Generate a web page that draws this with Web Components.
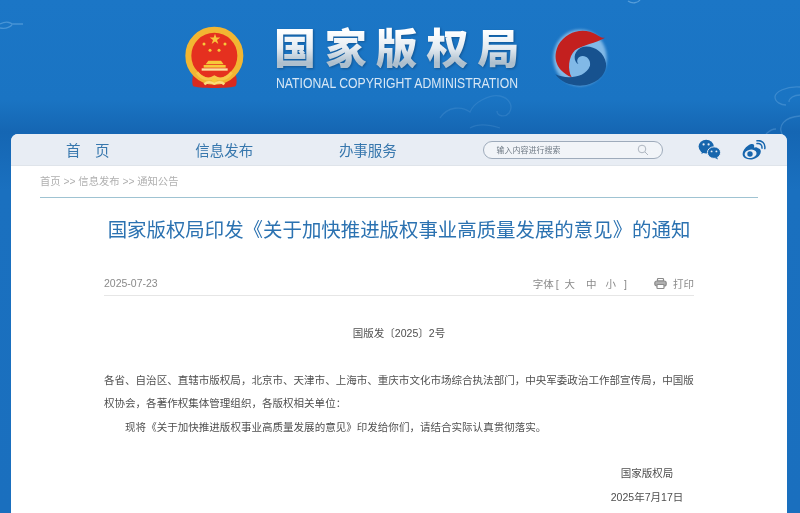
<!DOCTYPE html>
<html lang="zh-CN">
  <head>
    <meta charset="UTF-8" />
    <title>国家版权局</title>
    <style>
      html, body { margin: 0; height: 513px; overflow: hidden; }
      body {
        background: linear-gradient(#1b76c6 0, #1a74c3 100px, #1566b3 132px, #1a70bf 190px, #1a6fbe 513px);
        font-family: "Liberation Sans", "Noto Sans CJK SC", sans-serif;
      }
    </style>
  </head>
  <body>
    <template id="tpl-banner">
      <style>
        :host { display: flex; height: 134px; position: relative; box-sizing: border-box; padding: 15px 0 0 175px; gap: 20px; }
        .clouds { position: absolute; inset: 0; width: 100%; height: 100%; pointer-events: none; }
        .names { display: flex; flex-direction: column; width: 245px; position: relative; padding-top: 9px; filter: blur(.3px); }
        h1 {
          margin: 0 0 8px -1px; font: 900 42px/44px "Noto Sans CJK SC", sans-serif; letter-spacing: 8.8px; white-space: nowrap;
          background: linear-gradient(#fdfeff 18%, #e4ebf1 55%, #aebfcd 88%);
          -webkit-background-clip: text; background-clip: text; color: transparent;
          filter: drop-shadow(1px 1px 1px rgba(10, 60, 110, .55));
        }
        p { margin: 0 0 0 1px; font: 14.5px/15px "Liberation Sans", sans-serif; color: #d7e7f5; white-space: nowrap; transform: scaleX(.843); transform-origin: 0 50%; }
      </style>
      <svg class="clouds" viewBox="0 0 800 134" fill="none" stroke="#8fc3ee" stroke-opacity=".28" stroke-width="1.3">
        <path d="M0 24c8-4 12 0 12 0h11M0 28c6 1 10-1 12-3" stroke-opacity=".4" />
        <path d="M800 87c-14-1-25 5-25 10s6 8 11 8M800 95c-6 0-11 3-11 7M782 134c-4-8 2-17 18-18M766 134c3-3 6-5 10-5" />
        <path d="M640 0c-2 3-8 4-12 1" stroke-opacity=".5" />
        <path d="M440 118c8-12 22-12 30-6 4-10 20-18 30-16 9 2 14 10 9 17-4 5-12 3-12-2M470 128c10-6 24-2 30 0" stroke-opacity=".16" />
      </svg>
      <slot name="left"></slot>
      <div class="names">
        <h1><slot name="cn"></slot></h1>
        <p><slot name="en"></slot></p>
      </div>
      <slot name="right"></slot>
    </template>

    <template id="tpl-emblem">
      <style>:host { display: block; width: 80px; height: 85px; } svg { display: block; filter: blur(.4px); }</style>
      <svg width="80" height="85" viewBox="0 0 240 255">
        <path d="M58 165c-6 18-8 38-4 48 10 8 118 8 128 0 6-10 2-32-4-48z" fill="#d92a1f" />
        <circle cx="118" cy="122" r="78" fill="#e5301f" stroke="#f2b632" stroke-width="18" />
        <path d="M120 56l4 11.500h12l-10 7.500 4 12-10-7.500-10 7.500 4-12-10-7.500h12z" fill="#f9c43a" />
        <g fill="#f7c93a">
          <circle cx="87" cy="87" r="4.500" /><circle cx="105" cy="106" r="4.500" /><circle cx="132" cy="106" r="4.500" /><circle cx="150" cy="87" r="4.500" />
          <path d="M92 148l8-11h38l8 11z" /><rect x="86" y="150" width="66" height="8" /><rect x="80" y="160" width="78" height="7" fill="#fbe3a0" />
        </g>
        <path d="M66 172c14 20 36 26 52 14 16 12 38 6 52-14" fill="none" stroke="#f7c64a" stroke-width="9" />
        <path d="M88 208c8-8 18-8 30-2 12-6 22-6 30 2" fill="none" stroke="#fbdc7d" stroke-width="7" />
        <circle cx="118" cy="196" r="7" fill="#f7c93a" />
      </svg>
    </template>

    <template id="tpl-swirl">
      <style>:host { display: block; width: 80px; height: 85px; } svg { display: block; overflow: visible; filter: blur(.4px); }</style>
      <svg width="80" height="85" viewBox="0 0 240 255">
        <defs>
          <filter id="glow" x="-20%" y="-20%" width="140%" height="140%"><feGaussianBlur stdDeviation="5" /></filter>
        </defs>
        <ellipse cx="120" cy="128" rx="80" ry="84" fill="#9ccbf0" opacity=".8" filter="url(#glow)" />
        <path d="M195 68C180 70 175 58 150 50 115 40 75 55 55 90 38 125 45 165 95 187 82 165 85 125 105 106 125 90 170 84 195 68Z" fill="#c3201f" />
        <path d="M46 178C75 192 135 192 150 152 154 130 132 116 118 126 110 132 110 142 116 148 100 140 98 112 122 98 150 86 192 105 198 145 202 185 160 212 120 212 90 212 60 200 46 178Z" fill="#17528f" />
      </svg>
    </template>

    <template id="tpl-nav">
      <style>
        :host { display: flex; align-items: center; height: 31px; padding: 0 0 0 55px; gap: 85.7px; background: #e8edf4; border-bottom: 1px solid #dfe4ea; font: 14.5px/1 "Noto Sans CJK SC", sans-serif; color: #3777ad; }
        ::slotted(span) { position: relative; top: 1px; }
        .icons { display: flex; align-items: center; gap: 21px; margin-left: -50px; }
        svg { display: block; }
      </style>
      <slot></slot>
      <x-search></x-search>
      <div class="icons">
        <svg width="23" height="21" viewBox="0 0 23 21"><ellipse cx="8.2" cy="7.6" rx="7.6" ry="6.8" fill="#1766ad" /><path d="M4 12l-.6 3 3.6-2z" fill="#1766ad" /><ellipse cx="16" cy="13.6" rx="6.6" ry="5.8" fill="#1766ad" stroke="#e8edf4" stroke-width="1" /><path d="M19 18l1 2.4-3.4-1.6z" fill="#1766ad" /><circle cx="5.6" cy="5.4" r="1.1" fill="#e8edf4" /><circle cx="10.6" cy="5.4" r="1.1" fill="#e8edf4" /><circle cx="13.6" cy="12.4" r=".95" fill="#e8edf4" /><circle cx="18.4" cy="12.4" r=".95" fill="#e8edf4" /></svg>
        <svg width="24" height="20" viewBox="0 0 24 20"><path d="M16 8.2c2.8.6 3.4 3 2.4 5.2-1.6 3.6-5.6 6-10 6C4 19.4.6 17.5.6 14c0-3 2.4-6.4 5.6-8.6 2.6-1.6 5-1.8 5.7-.6.5.8.3 1.8 0 2.8 1.6-.6 3-.8 4.1.6z" fill="#1766ad" /><ellipse cx="8.6" cy="13.8" rx="6" ry="4.2" fill="#e8edf4" transform="rotate(-10 8.6 13.8)" /><circle cx="8" cy="14" r="2.7" fill="#1766ad" /><path d="M15 3.6c3.2-.8 5.4 1.6 5 4.6" fill="none" stroke="#1766ad" stroke-width="1.5" stroke-linecap="round" /><path d="M15 .8c5-1 8.6 2.800 7.800 7.800" fill="none" stroke="#1766ad" stroke-width="1.5" stroke-linecap="round" /></svg>
      </div>
    </template>

    <template id="tpl-search">
      <style>
        :host { display: flex; align-items: center; justify-content: space-between; box-sizing: border-box; width: 180px; height: 18px; padding: 0 13px; border: 1px solid #9eabbb; border-bottom-width: 1.5px; border-radius: 9px; background: #f1f4f8; font: 8px/1 "Noto Sans CJK SC", sans-serif; color: #6f7a85; }
        svg { display: block; }
      </style>
      <span>输入内容进行搜索</span>
      <svg width="12" height="12" viewBox="0 0 12 12" fill="none" stroke="#aeb6c0"><circle cx="5" cy="5" r="3.8" /><path d="M8 8l3 3" /></svg>
    </template>

    <template id="tpl-crumbs">
      <style>
        :host { display: block; box-sizing: border-box; height: 32px; padding-top: 9px; border-bottom: 1px solid #9fc3d2; margin: 0 29px; font: 10.3px/14px "Liberation Sans", "Noto Sans CJK SC", sans-serif; color: #b0b0b0; }
      </style>
      <slot></slot>
    </template>

    <template id="tpl-article">
      <style>
        :host { display: block; padding: 0 93px; }
        h2 { margin: 0; padding-top: 18px; height: 55px; text-align: center; font: 400 19.43px/26px "Noto Sans CJK SC", sans-serif; color: #2b72b1; white-space: nowrap; }
        .meta { display: flex; align-items: center; height: 24px; border-bottom: 1px solid #e6e6e6; font-size: 10.5px; color: #8a8a8a; }
        .date { flex: 1; }
        .size { display: flex; align-items: baseline; }
        .print { display: flex; align-items: center; gap: 6px; margin-left: 27px; }
        svg { display: block; }
        .body { font-size: 10.54px; line-height: 23.5px; color: #4f4f4f; }
      </style>
      <h2><slot name="title"></slot></h2>
      <div class="meta">
        <div class="date"><slot name="date"></slot></div>
        <div class="size">
          <span>字体</span><span style="margin-left:2px">[</span><span style="margin-left:6px">大</span><span style="margin-left:11px">中</span><span style="margin-left:9px">小</span><span style="margin-left:8px">]</span>
        </div>
        <div class="print">
          <svg width="13" height="13" viewBox="0 0 13 13" fill="none" stroke="#8a8a8a" stroke-width="1.2"><rect x="3.5" y="1.500" width="6" height="2.500" rx=".8" /><rect x=".8" y="4" width="11.4" height="5" rx="2" fill="#b0b0b0" /><rect x="3" y="7.500" width="7" height="4" rx=".8" fill="#fff" /></svg>
          打印
        </div>
      </div>
      <div class="body"><slot></slot></div>
    </template>

    <template id="tpl-card">
      <style>
        :host { display: block; margin: 0 13px 0 11px; height: 379px; overflow: hidden; background: #fff; border-radius: 7px 7px 0 0; filter: blur(.3px); }
      </style>
      <slot></slot>
    </template>

    <x-banner>
      <x-emblem slot="left"></x-emblem>
      <span slot="cn">国家版权局</span>
      <span slot="en">NATIONAL COPYRIGHT ADMINISTRATION</span>
      <x-swirl slot="right"></x-swirl>
    </x-banner>

    <x-card>
      <x-nav>
        <span>首　页</span>
        <span>信息发布</span>
        <span>办事服务</span>
      </x-nav>
      <x-crumbs>首页 &gt;&gt; 信息发布 &gt;&gt; 通知公告</x-crumbs>
      <x-article>
        <span slot="title">国家版权局印发《关于加快推进版权事业高质量发展的意见》的通知</span>
        <span slot="date">2025-07-23</span>
        <div style="text-align:center;margin:26px 0 23px">国版发〔2025〕2号</div>
        <div>各省、自治区、直辖市版权局，北京市、天津市、上海市、重庆市文化市场综合执法部门，中央军委政治工作部宣传局，中国版权协会，各著作权集体管理组织，各版权相关单位：</div>
        <div style="text-indent:2em">现将《关于加快推进版权事业高质量发展的意见》印发给你们，请结合实际认真贯彻落实。</div>
        <div style="width:94px;margin:23px 0 0 auto;text-align:center;white-space:nowrap">国家版权局<br />2025年7月17日</div>
      </x-article>
    </x-card>

    <script>
      class Base extends HTMLElement {
        connectedCallback() {
          if (this.shadowRoot) return;
          const tpl = document.getElementById(this.constructor.tpl);
          this.attachShadow({ mode: "open" }).append(tpl.content.cloneNode(true));
        }
      }
      const tags = {
        "x-banner": "tpl-banner",
        "x-emblem": "tpl-emblem",
        "x-swirl": "tpl-swirl",
        "x-nav": "tpl-nav",
        "x-search": "tpl-search",
        "x-crumbs": "tpl-crumbs",
        "x-article": "tpl-article",
        "x-card": "tpl-card",
      };
      for (const [tag, tpl] of Object.entries(tags)) {
        customElements.define(tag, class extends Base { static tpl = tpl; });
      }
    </script>
  </body>
</html>
